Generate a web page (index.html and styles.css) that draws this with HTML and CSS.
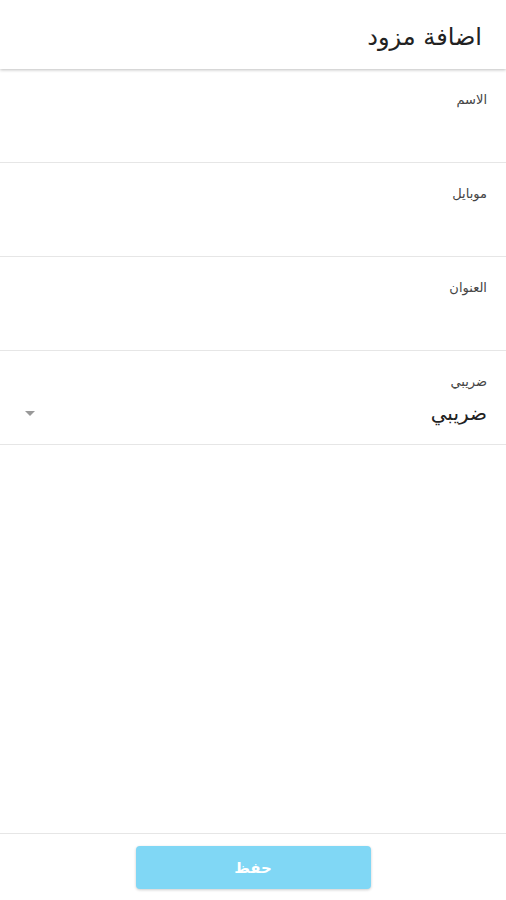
FILE: index.html
```html
<!DOCTYPE html>
<html lang="ar" dir="rtl">
<head>
<meta charset="utf-8">
<link rel="stylesheet" href="styles.css">
</head>
<body>
<div class="page">
  <header class="topbar"><h1 class="title">اضافة مزود</h1></header>
  <main class="form">
    <div class="field"><label class="label">الاسم</label></div>
    <div class="field"><label class="label">موبايل</label></div>
    <div class="field"><label class="label">العنوان</label></div>
    <div class="field select">
      <label class="label">ضريبي</label>
      <div class="select-row">
        <span class="value">ضريبي</span>
        <span class="arrow"></span>
      </div>
    </div>
  </main>
  <footer class="footer"><button class="save">حفظ</button></footer>
</div>
</body>
</html>
```
FILE: styles.css
```css
* { box-sizing: border-box; }
html, body { margin: 0; padding: 0; background: #fff; }
body { font-family: "DejaVu Sans", "Noto Sans", sans-serif; color: #222; }
.page { display: flex; flex-direction: column; height: 900px; }
.topbar {
  height: 69px; display: flex; align-items: center; padding: 4px 24px 0;
  box-shadow: 0 1px 3px rgba(0,0,0,0.25); position: relative; z-index: 1;
}
.title { margin: 0; font-size: 24px; font-weight: normal; color: #222; }
.form { flex: 1; }
.field {
  height: 94px; border-bottom: 1px solid #e6e6e6; padding: 23px 19px 0;
}
.label { display: block; font-size: 13px; color: #444; }
.select-row { display: flex; align-items: center; justify-content: space-between; margin-top: 12px; }
.value { font-size: 20px; color: #222; }
.arrow {
  width: 0; height: 0; margin-left: 6px;
  border-left: 5px solid transparent; border-right: 5px solid transparent;
  border-top: 5px solid #999;
}
.footer {
  height: 67px; border-top: 1px solid #e6e6e6; display: flex; justify-content: center; padding-top: 12px;
}
.save {
  width: 235px; height: 43px; border: none; border-radius: 4px;
  background: #80d7f5; color: #fff; font-family: inherit; font-size: 15px; font-weight: bold;
  box-shadow: 0 1px 3px rgba(0,0,0,0.2);
}
```
